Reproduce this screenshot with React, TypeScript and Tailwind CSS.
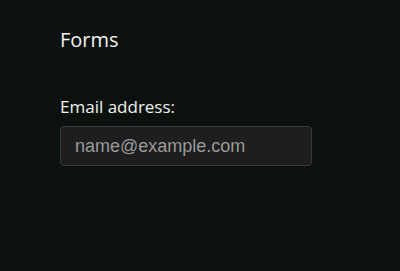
import React from "react";

export default function App() {
  return (
    <div className="min-h-[271px] w-[400px] bg-[#0b120e] pl-[60px] pt-[26px] font-['Open_Sans',sans-serif] text-[#f2f2f2]">
      <h1 className="text-[20px] leading-[28px]">Forms</h1>
      <div className="mt-[41px] flex flex-col">
        <label className="text-[17px] leading-[24px]">Email address:</label>
        <input
          type="email"
          placeholder="name@example.com"
          className="mt-[7px] h-[40px] w-[252px] rounded-[4px] border border-[#3a3a3a] bg-[#1e1e1e] px-[14px] font-['Liberation_Sans',sans-serif] text-[18px] text-[#ddd] outline-none placeholder:text-[#9a9a9a]"
        />
      </div>
    </div>
  );
}
